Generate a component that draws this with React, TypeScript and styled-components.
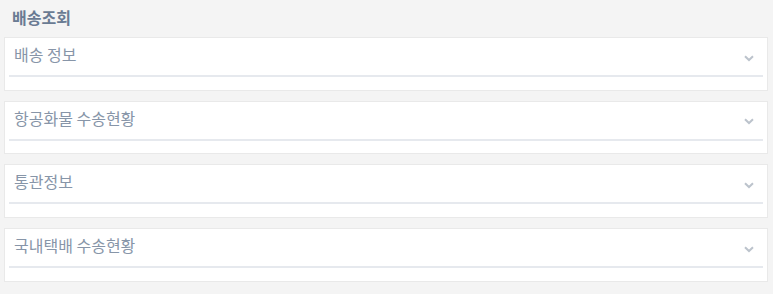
import React from "react";
import styled, { createGlobalStyle } from "styled-components";

const Global = createGlobalStyle`
  html, body { margin: 0; padding: 0; background: #f4f4f4; }
  body { font-family: "Noto Sans CJK KR", "Noto Sans", sans-serif; }
`;

const Page = styled.div`
  padding: 0 5px 0 4px;
  display: flex;
  flex-direction: column;
`;

const Title = styled.h2`
  margin: 0;
  height: 33px;
  padding: 0 0 4px 8px;
  display: flex;
  align-items: center;
  font-size: 16px;
  line-height: 20px;
  font-weight: 700;
  color: #6a7b93;
`;

const List = styled.div`
  display: flex;
  flex-direction: column;
  gap: 10px;
`;

const Card = styled.div`
  background: #fff;
  border: 1px solid #e9e9e9;
  padding: 0 4px 12.7px;
`;

const Header = styled.div`
  height: 37px;
  border-bottom: 2px solid #e6e9ee;
  display: flex;
  align-items: center;
  justify-content: space-between;
  padding: 0 9px 0 5px;
  box-sizing: content-box;
`;

const Label = styled.span`
  font-size: 16px;
  line-height: 20px;
  color: #8795a8;
  margin-top: -5px;
`;

const Chevron = styled.svg`
  width: 10px;
  height: 7px;
  margin-top: 3px;
`;

const items = ["배송 정보", "항공화물 수송현황", "통관정보", "국내택배 수송현황"];

export default function App() {
  return (
    <>
      <Global />
      <Page>
        <Title>배송조회</Title>
        <List>
          {items.map((t) => (
            <Card key={t}>
              <Header>
                <Label>{t}</Label>
                <Chevron viewBox="0 0 10 7">
                  <path d="M1 1.2 L5 5 L9 1.2" fill="none" stroke="#bcc3cc" strokeWidth="2" />
                </Chevron>
              </Header>
            </Card>
          ))}
        </List>
      </Page>
    </>
  );
}
